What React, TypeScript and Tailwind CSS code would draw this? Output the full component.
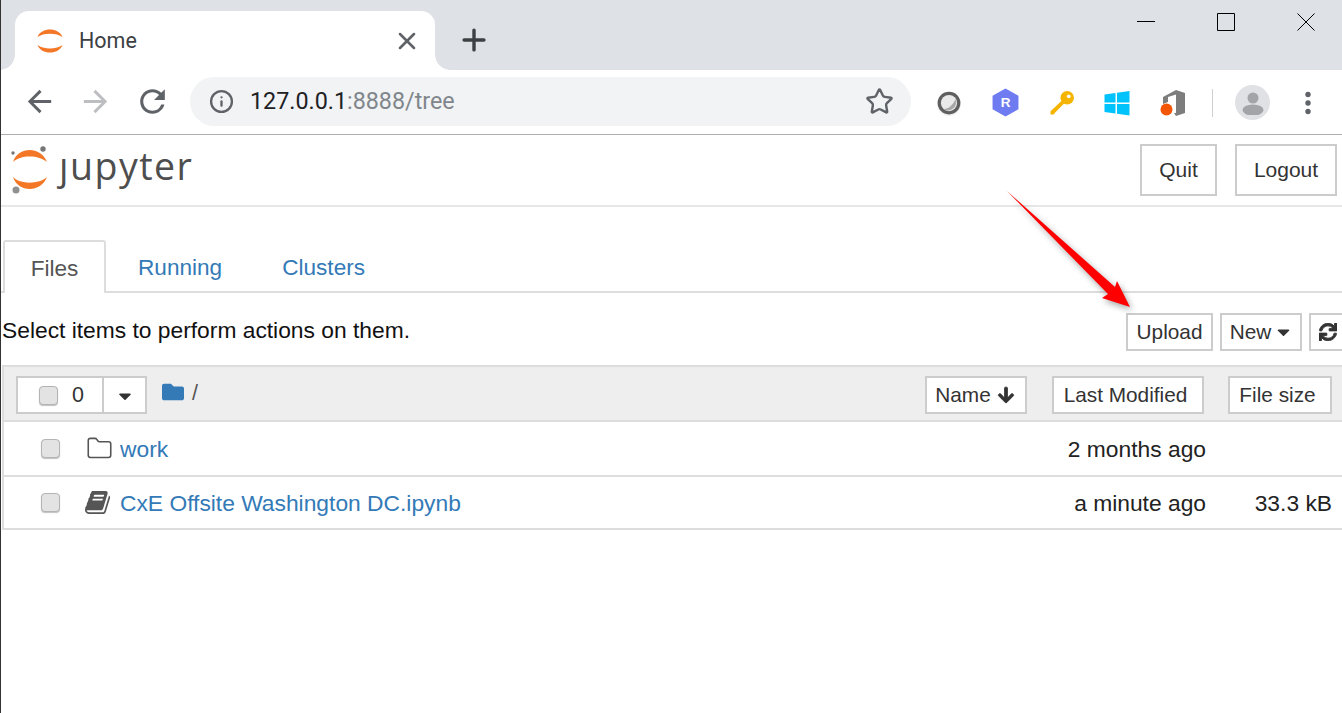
import { Folder, Info, Plus, Star, X } from "lucide-react";
import { FaArrowDown, FaCaretDown, FaFolder, FaSync } from "react-icons/fa";

const sans = "font-['Liberation_Sans',Arial,sans-serif]";
const ui = "font-['Roboto',sans-serif]";

const BOOK =
  "M1639 478q40 57 18 129l-275 906q-19 64-76.500 107.500t-122.500 43.500h-923q-77 0-148.500-53.500t-99.500-131.500q-24-67-2-127 0-4 3-27t4-37q1-8-3-21.500t-3-19.500q2-11 8-21t16.500-23.500 16.500-23.500q23-38 45-91.500t30-91.500q3-10 .5-30t-.5-28q3-11 17-28t17-23q21-36 42-92t25-90q1-9-2.500-32t.5-28q4-13 22-30.500t22-22.500q19-26 42.500-84.500t27.500-96.500q1-8-3-25.500t-2-26.500q2-8 9-18t18-23 17-21q8-12 16.500-30.500t15-35 16-36 19.500-32 26.500-23.500 36-11.500 47.500 5.500l-1 3q38-9 51-9h761q74 0 114 56t18 130l-274 906q-36 119-71.500 153.500t-128.500 34.500h-869q-27 0-38 15-11 16-1 43 24 70 144 70h923q29 0 56-15.500t35-41.500l300-987q7-22 5-57 38 15 59 43zm-1064 2q-4 13 2 22.500t20 9.500h608q13 0 25.500-9.500t16.500-22.500l21-64q4-13-2-22.500t-20-9.500h-608q-13 0-25.500 9.500t-16.500 22.500zm-83 256q-4 13 2 22.500t20 9.500h608q13 0 25.500-9.500t16.500-22.500l21-64q4-13-2-22.500t-20-9.500h-608q-13 0-25.500 9.500t-16.500 22.500z";

const Checkbox = ({ className = "" }: { className?: string }) => (
  <span className={`block h-[19px] w-[19px] shrink-0 rounded-[4px] border border-[#b4b4b4] bg-[#e3e3e3] shadow-[0_1px_1px_rgba(0,0,0,0.25)] ${className}`} />
);

const Extensions = () => (
  <div className="flex items-center">
    <svg viewBox="0 0 24 24" className="ml-[25px] h-[26px] w-[26px]">
      <circle cx="12" cy="13" r="11" fill="#eeeeee" />
      <circle cx="12" cy="12" r="10.500" fill="#5f5f5f" />
      <circle cx="12" cy="12" r="7.500" fill="#e9e9e9" />
      <path d="M18 8.500A7.500 7.500 0 0 1 6.800 17.500C11 18 15.500 14 18 8.500Z" fill="#a8a8a8" />
    </svg>
    <svg viewBox="0 0 26 28" className="ml-[30px] h-[29px] w-[27px]">
      <path d="M13 0.500L25.500 7.500V20.500L13 27.500L0.500 20.500V7.500Z" fill="#6f7bf0" />
      <text x="13" y="18.500" textAnchor="middle" fontSize="13" fontWeight="700" fill="#ffffff" fontFamily="Liberation Sans">R</text>
    </svg>
    <svg viewBox="0 0 24 24" className="ml-[31px] h-[25px] w-[25px]">
      <circle cx="16.500" cy="7.500" r="6.500" fill="#f4b400" />
      <circle cx="18" cy="6" r="1.800" fill="#ffffff" />
      <path d="M12 9.500L14.500 12L5 21.500L3.500 23.500H0.500V20.500Z" fill="#f4b400" />
    </svg>
    <svg viewBox="0 0 26 26" className="ml-[29px] h-[26px] w-[26px]">
      <path d="M0.500 4.500L11.500 3V12.500H0.500Z M13 2.800L25.500 1V12.500H13Z M0.500 14H11.500V23.500L0.500 22Z M13 14H25.500V25.500L13 23.700Z" fill="#00c3fb" />
    </svg>
    <svg viewBox="0 0 26 28" className="ml-[30px] h-[28px] w-[26px]">
      <path d="M3 8L16 1L25 4V24L16 27L14 24H16V5.500L8 8V13L3 15Z" fill="#7d7d7d" />
      <circle cx="6.500" cy="20.500" r="6" fill="#f25606" />
    </svg>
    <span className="ml-[26px] h-[28px] w-px bg-[#d0d1d3]" />
    <span className="ml-[22px] flex h-[35px] w-[35px] items-center justify-center rounded-full bg-[#dfe1e5]">
      <svg viewBox="0 0 24 24" className="h-[24px] w-[24px]">
        <circle cx="12" cy="7" r="5.500" fill="#a2a4a8" />
        <ellipse cx="12" cy="19" rx="10.500" ry="5.500" fill="#a2a4a8" />
      </svg>
    </span>
    <svg viewBox="0 0 24 24" className="ml-[26px] h-[24px] w-[24px]">
      <circle cx="12" cy="3.500" r="2.700" fill="#5f6368" />
      <circle cx="12" cy="12" r="2.700" fill="#5f6368" />
      <circle cx="12" cy="20.500" r="2.700" fill="#5f6368" />
    </svg>
  </div>
);

const TitleBar = () => (
  <div className="flex h-[70px] justify-between bg-[#dee1e6]">
    <div className="flex items-end pl-[15px]">
      <div className="relative flex h-[59px] w-[420px] items-center rounded-t-[14px] bg-white pl-[22px] pr-[14px]">
        {/* flared tab corners */}
        <span className="absolute -left-[15px] bottom-0 h-[15px] w-[15px] bg-[radial-gradient(circle_at_0_0,#dee1e6_14.500px,#ffffff_15px)]" />
        <span className="absolute -right-[15px] bottom-0 h-[15px] w-[15px] bg-[radial-gradient(circle_at_100%_0,#dee1e6_14.500px,#ffffff_15px)]" />
        <svg viewBox="0 0 26 26" className="h-[26px] w-[26px]">
          <path d="M0.500 9C4 -1 22 -1 25.500 9C20 4.500 6 4.500 0.500 9Z" fill="#f37726" />
          <path d="M0.500 17C4 27 22 27 25.500 17C20 21.500 6 21.500 0.500 17Z" fill="#f37726" />
        </svg>
        <span className={`ml-[16px] text-[21.500px] leading-none text-[#3c4043] ${ui}`}>Home</span>
        <X className="ml-auto h-[28px] w-[28px] text-[#5f6368]" strokeWidth={2.200} />
      </div>
      <Plus className="mb-[13px] ml-[22px] h-[34px] w-[34px] text-[#3c4043]" strokeWidth={2.400} />
    </div>
    <div className="flex pr-[27px] pt-[13px]">
      <svg viewBox="0 0 18 18" className="h-[18px] w-[18px]"><path d="M0 8.500H18" stroke="#000000" /></svg>
      <svg viewBox="0 0 18 18" className="ml-[62px] h-[18px] w-[18px]"><path d="M0.500 0.500H17.500V17.500H0.500Z" stroke="#000000" fill="none" /></svg>
      <svg viewBox="0 0 18 18" className="ml-[62px] h-[18px] w-[18px]"><path d="M0.500 0.500L17.500 17.500M17.500 0.500L0.500 17.500" stroke="#000000" fill="none" /></svg>
    </div>
  </div>
);

const Toolbar = () => (
  <div className="flex h-[65px] items-start border-b border-[#aeaeae] bg-white pl-[22px] pt-[7px]">
    <svg viewBox="0 0 24 24" className="mt-[7px] h-[35px] w-[35px] text-[#5f6368]">
      <path d="M20 11H7.830l5.590-5.590L12 4l-8 8 8 8 1.410-1.410L7.830 13H20v-2z" fill="currentColor" />
    </svg>
    <svg viewBox="0 0 24 24" className="ml-[21px] mt-[7px] h-[35px] w-[35px] text-[#bcbec1]">
      <path d="M12 4l-1.410 1.410L16.170 11H4v2h12.170l-5.580 5.590L12 20l8-8z" fill="currentColor" />
    </svg>
    <svg viewBox="0 0 24 24" className="ml-[21px] mt-[6px] h-[37px] w-[37px] text-[#5f6368]">
      <path d="M17.650 6.350A7.958 7.958 0 0 0 12 4c-4.420 0-7.990 3.580-7.990 8s3.570 8 7.990 8c3.730 0 6.840-2.550 7.730-6h-2.080A5.990 5.990 0 0 1 12 18c-3.310 0-6-2.690-6-6s2.690-6 6-6c1.660 0 3.140.690 4.220 1.780L13 11h7V4l-2.350 2.350z" fill="currentColor" />
    </svg>
    <div className="ml-[19px] flex h-[49px] w-[721px] shrink-0 items-center rounded-full bg-[#f1f3f4] pl-[19px] pr-[17px]">
      <Info className="h-[25px] w-[25px] text-[#5f6368]" strokeWidth={2.200} />
      <span className={`ml-[16px] text-[23.300px] leading-none text-[#202124] ${ui}`}>
        127.0.0.1<span className="text-[#80868b]">:8888/tree</span>
      </span>
      <Star className="ml-auto h-[29px] w-[29px] text-[#5f6368]" strokeWidth={2} />
    </div>
    <div className="mt-[8px]">
      <Extensions />
    </div>
  </div>
);

const HeaderButton = ({ label, className }: { label: string; className: string }) => (
  <span className={`flex h-[52px] items-center justify-center border-2 border-[#cccccc] text-[21px] text-[#333333] ${sans} ${className}`}>{label}</span>
);

const JupyterHeader = () => (
  <div className="flex h-[72px] items-start justify-between border-b-2 border-[#e7e7e7] pt-[9px]">
    <div className="flex">
      <svg viewBox="0 0 38 48" className="ml-[11px] mt-[2px] h-[48px] w-[38px]">
        <circle cx="32" cy="3" r="2.700" fill="#767677" />
        <circle cx="2" cy="7" r="1.700" fill="#767677" />
        <circle cx="5" cy="44" r="3.500" fill="#909090" />
        <path d="M2 16C7 0 30 0 36 16C28 8.500 9 8.500 2 16Z" fill="#f37726" />
        <path d="M2 31C7 47 30 47 36 31C28 38.500 9 38.500 2 31Z" fill="#f37726" />
      </svg>
      <span className="relative ml-[10px] mt-[-4px] font-['Open_Sans',sans-serif] text-[37.500px] leading-[52px] tracking-[1.500px] text-[#4e4e4e]">
        jupyter
        {/* the logo's j has no dot */}
        <span className="absolute left-[2px] top-[8px] h-[10px] w-[14px] bg-white" />
      </span>
    </div>
    <div className="flex pr-[5px]">
      <HeaderButton label="Quit" className="w-[77px]" />
      <HeaderButton label="Logout" className="ml-[18px] w-[102px]" />
    </div>
  </div>
);

const Tabs = () => (
  <div className={`mt-[33px] flex h-[53px] border-b-2 border-[#dddddd] pl-[3px] text-[22.600px] ${sans}`}>
    <span className="flex h-[53px] w-[103px] items-center justify-center rounded-t-[3px] border-2 border-b-0 border-[#dddddd] bg-white pt-[2px] text-[#555555]">Files</span>
    <span className="ml-[32px] flex h-[53px] items-center pt-[2px] text-[#337ab7]">Running</span>
    <span className="ml-[60px] flex h-[53px] items-center pt-[2px] text-[#337ab7]">Clusters</span>
  </div>
);

const SmallButton = ({ children, className }: { children: React.ReactNode; className: string }) => (
  <span className={`flex h-[38px] shrink-0 items-center justify-center border-2 border-[#cccccc] bg-white text-[20.800px] text-[#333333] ${className}`}>{children}</span>
);

const ActionRow = () => (
  <div className={`flex h-[72px] items-start justify-between overflow-hidden pl-[2px] pt-[20px] ${sans}`}>
    <span className="mt-[1px] text-[22.800px] leading-[32px] text-[#111111]">Select items to perform actions on them.</span>
    <div className="-mr-[14px] flex gap-[7px]">
      <SmallButton className="w-[87px]">Upload</SmallButton>
      <SmallButton className="w-[82px]">New<FaCaretDown className="ml-[4px] h-[20px] w-[17px]" /></SmallButton>
      <SmallButton className="w-[47px] justify-start pl-[8px]"><FaSync className="h-[18px] w-[18px]" stroke="currentColor" strokeWidth={25} /></SmallButton>
    </div>
  </div>
);

const ListHeader = () => (
  <div className={`flex h-[57px] items-start border-2 border-r-0 border-[#dddddd] bg-[#eeeeee] pl-[12px] pt-[9px] text-[#333333] ${sans}`}>
    <div className="flex h-[38px] w-[131px] border-2 border-[#cccccc] bg-white text-[21.500px]">
      <div className="flex w-[86px] items-center border-r-2 border-[#cccccc] pl-[21px]">
        <Checkbox />
        <span className="ml-[14px]">0</span>
      </div>
      <div className="flex flex-1 items-center justify-center">
        <FaCaretDown className="mt-[2px] h-[20px] w-[18px] text-[#333333]" />
      </div>
    </div>
    <FaFolder className="ml-[15px] mt-[5px] h-[22px] w-[22px] text-[#337ab7]" />
    <span className="ml-[8px] mt-[1px] text-[21.500px] leading-[32px] text-[#555555]">/</span>
    <SmallButton className="ml-auto w-[102px] pr-[2px]">Name<FaArrowDown className="ml-[6px] h-[18px] w-[18px]" stroke="currentColor" strokeWidth={25} /></SmallButton>
    <SmallButton className="ml-[25px] w-[152px] pr-[5px]">Last Modified</SmallButton>
    <SmallButton className="ml-[24px] mr-[10px] w-[104px] pr-[5px]">File size</SmallButton>
  </div>
);

const FileRow = ({ icon, name, modified, size, className }: { icon: React.ReactNode; name: string; modified: string; size?: string; className: string }) => (
  <div className={`flex items-center border-l-2 border-b-2 border-[#dddddd] pl-[37px] pr-[10px] text-[22.800px] ${sans} ${className}`}>
    <Checkbox />
    <span className="ml-[25px] flex w-[35px] shrink-0">{icon}</span>
    <span className="mt-[1px] text-[#337ab7]">{name}</span>
    <span className="ml-auto mt-[1px] text-[#222222]">{modified}</span>
    <span className="mt-[1px] w-[126px] text-right text-[#222222]">{size}</span>
  </div>
);

const Arrow = () => (
  <svg viewBox="0 0 140 130" className="absolute left-[1000px] top-[185px] h-[130px] w-[140px] drop-shadow-[2px_3px_3px_rgba(0,0,0,0.35)]">
    <path d="M7 6L115 102L117 96L130 122L102 113L108 109Z" fill="#ff0000" />
  </svg>
);

export default function App() {
  return (
    <div className="relative h-[713px] w-full overflow-hidden bg-white">
      <TitleBar />
      <Toolbar />
      <JupyterHeader />
      <Tabs />
      <ActionRow />
      <div className="ml-[2px]">
        <ListHeader />
        <FileRow
          className="h-[55px]"
          icon={<Folder className="ml-[1px] h-[27px] w-[27px] text-[#555555]" strokeWidth={1.400} />}
          name="work"
          modified="2 months ago"
        />
        <FileRow
          className="h-[53px]"
          icon={<svg viewBox="0 0 1792 1792" className="h-[27px] w-[27px] text-[#555555]"><path d={BOOK} fill="currentColor" /></svg>}
          name="CxE Offsite Washington DC.ipynb"
          modified="a minute ago"
          size="33.3 kB"
        />
      </div>
      <Arrow />
      <span className="absolute bottom-0 left-0 top-0 w-px bg-[#333333]" />
    </div>
  );
}
